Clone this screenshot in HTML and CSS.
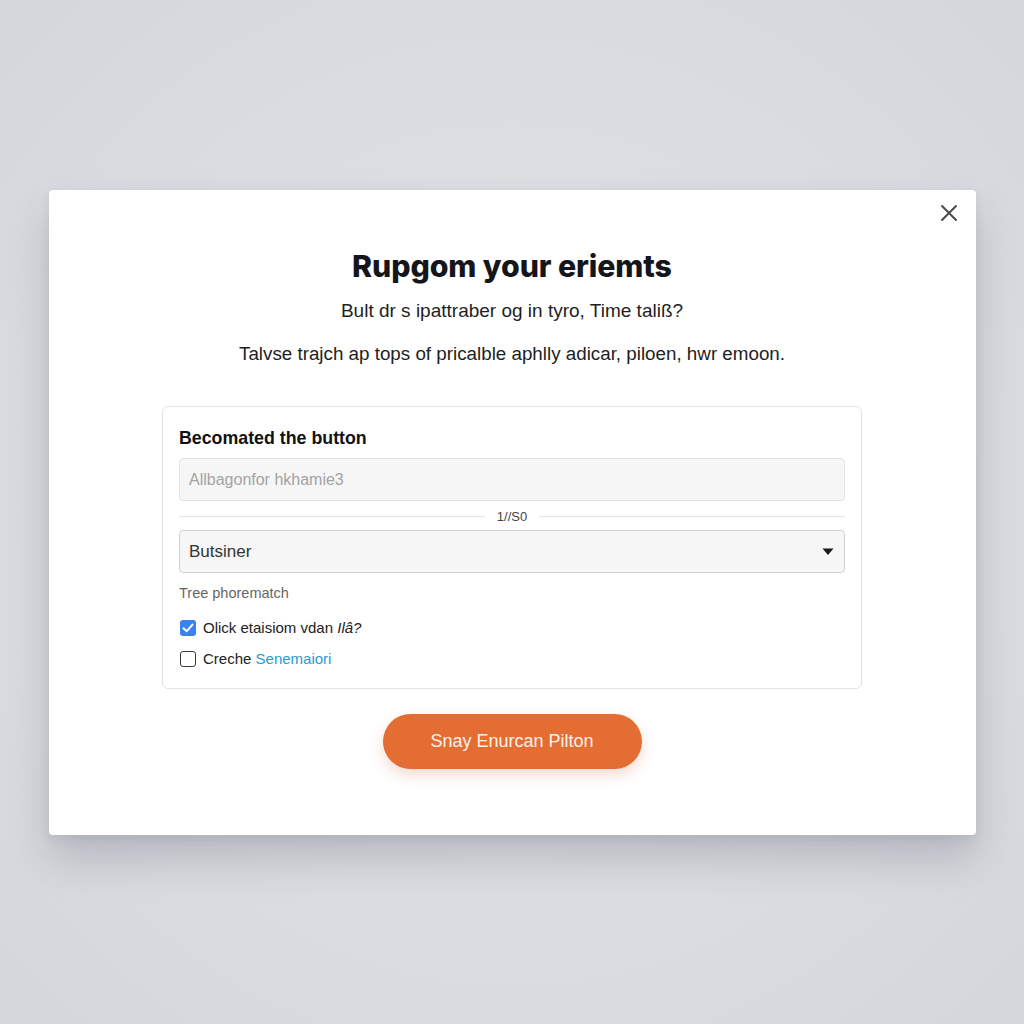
FILE: index.html
```html
<!DOCTYPE html>
<html lang="en">
<head>
<meta charset="utf-8">
<title>Modal</title>
<link rel="stylesheet" href="styles.css">
</head>
<body>
<div class="page">
  <div class="modal">
    <button class="close" aria-label="Close">
      <svg width="20" height="20" viewBox="0 0 20 20"><path d="M3 3 L17 17 M17 3 L3 17" stroke="#4a4a4a" stroke-width="2" stroke-linecap="round" fill="none"/></svg>
    </button>
    <h1 class="title">Rupgom your eriemts</h1>
    <p class="sub">Bult dr s ipattraber og in tyro, Time taliß?</p>
    <p class="sub sub2">Talvse trajch ap tops of pricalble aphlly adicar, piloen, hwr emoon.</p>
    <div class="card">
      <div class="label">Becomated the button</div>
      <div class="input">Allbagonfor hkhamie3</div>
      <div class="divider"><span class="line"></span><span class="divtext">1//S0</span><span class="line"></span></div>
      <div class="select"><span>Butsiner</span>
        <svg width="12" height="8" viewBox="0 0 12 8"><path d="M0.5 0.5 H11.5 L6 7 Z" fill="#1a1a1a"/></svg>
      </div>
      <div class="helper">Tree phorematch</div>
      <div class="check">
        <span class="box checked"><svg width="16" height="16" viewBox="0 0 16 16"><path d="M3.5 8.3 L6.6 11.3 L12.5 4.6" stroke="#fff" stroke-width="2" fill="none" stroke-linecap="round" stroke-linejoin="round"/></svg></span>
        <span>Olick etaisiom vdan <i>Ilâ?</i></span>
      </div>
      <div class="check check2">
        <span class="box"></span>
        <span>Creche <a class="link" href="#">Senemaiori</a></span>
      </div>
    </div>
    <button class="cta">Snay Enurcan Pilton</button>
  </div>
</div>
</body>
</html>
```
FILE: styles.css
```css
* { box-sizing: border-box; }
html, body { margin: 0; padding: 0; }
body {
  background: #d9dce0;
  font-family: "Liberation Sans", Arial, sans-serif;
  color: #1f1f1f;
}
.page {
  width: 1024px;
  height: 1024px;
  display: flex;
  align-items: flex-start;
  justify-content: center;
  padding-top: 190px;
  background: radial-gradient(ellipse at 50% 50%, #e2e4e7 0%, #d8dbdf 70%, #d3d6da 100%);
}
.modal {
  position: relative;
  width: 927px;
  height: 645px;
  background: #ffffff;
  border-radius: 4px;
  box-shadow: 0 24px 40px rgba(60, 66, 80, 0.22), 0 4px 10px rgba(60, 66, 80, 0.08);
  display: flex;
  flex-direction: column;
  align-items: center;
  padding-top: 58px;
}
.close {
  position: absolute;
  top: 13px;
  right: 17px;
  width: 20px;
  height: 20px;
  padding: 0;
  border: 0;
  background: none;
  display: flex;
}
.title {
  margin: 0;
  font-family: Inter, "Liberation Sans", sans-serif;
  font-weight: 800;
  font-size: 30.3px;
  line-height: 36px;
  color: #14161c;
  letter-spacing: -0.1px;
}
.sub {
  margin: 15px 0 0;
  font-size: 19px;
  line-height: 24px;
  color: #1e1e1e;
}
.sub2 { margin-top: 19px; font-size: 18.8px; }
.card {
  margin-top: 40px;
  width: 700px;
  border: 1px solid #e3e3e3;
  border-radius: 6px;
  padding: 21px 16px 19px;
  display: flex;
  flex-direction: column;
}
.label {
  font-weight: 700;
  font-size: 17.8px;
  line-height: 20px;
  color: #121212;
}
.input, .select {
  height: 43px;
  border-radius: 4px;
  background: #f6f6f6;
  display: flex;
  align-items: center;
  padding: 0 9px;
  font-size: 16px;
}
.input {
  margin-top: 10px;
  border: 1px solid #e2e2e2;
  color: #a3a3a3;
}
.divider {
  margin-top: 8px;
  height: 14px;
  display: flex;
  align-items: center;
  gap: 12px;
}
.line { flex: 1; height: 1px; background: #e4e4e4; }
.divtext { font-size: 13px; color: #444; }
.select {
  margin-top: 7px;
  border: 1px solid #cfcfcf;
  color: #333;
  font-size: 17px;
  justify-content: space-between;
  padding-right: 10px;
}
.helper {
  margin-top: 12px;
  font-size: 14.5px;
  line-height: 16px;
  color: #666;
}
.check {
  margin-top: 17px;
  display: flex;
  align-items: center;
  gap: 7px;
  font-size: 15px;
  line-height: 20px;
  color: #222;
  padding-left: 1px;
}
.check2 { margin-top: 11px; }
.box {
  width: 16px;
  height: 16px;
  border: 1.5px solid #3a3a3a;
  border-radius: 3px;
  display: flex;
  background: #fff;
}
.box.checked {
  border: 0;
  background: #3b82f0;
}
.link { color: #2a9bd0; text-decoration: none; }
.cta {
  margin-top: 25px;
  width: 259px;
  height: 55px;
  border: 0;
  border-radius: 28px;
  background: #e46d33;
  color: #fdf2ea;
  font-family: "Liberation Sans", Arial, sans-serif;
  font-size: 18px;
  box-shadow: 0 6px 14px rgba(200, 90, 40, 0.22);
}
```
